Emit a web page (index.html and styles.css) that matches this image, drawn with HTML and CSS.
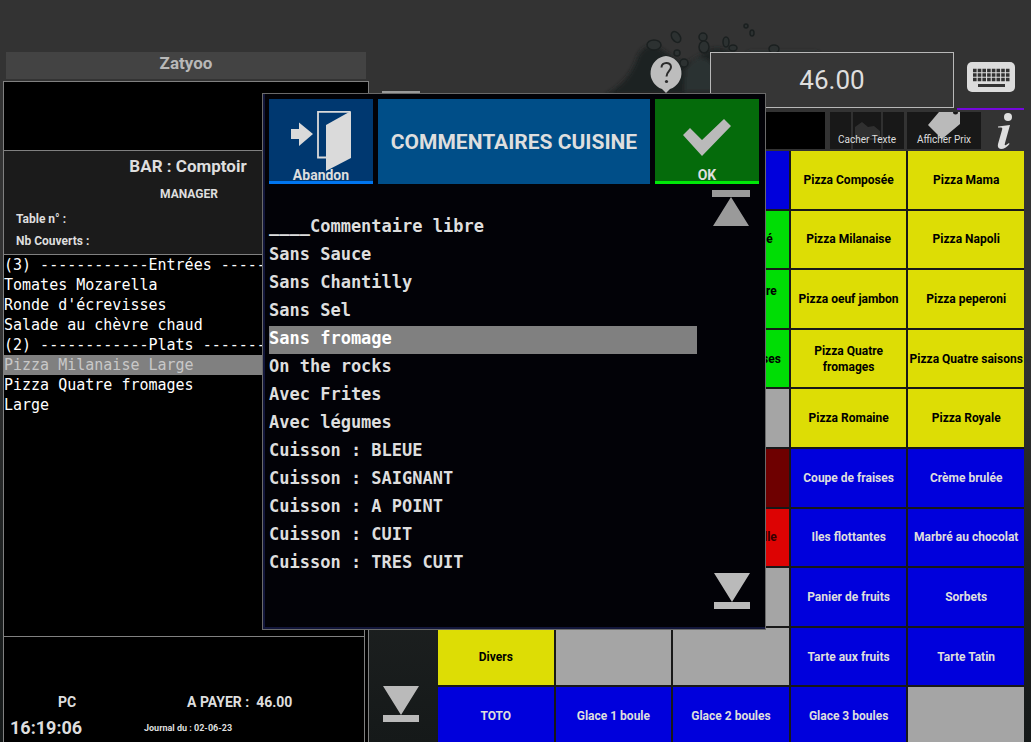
FILE: index.html
```
<!DOCTYPE html>
<html lang="fr">
<head>
<meta charset="utf-8">
<title>Zatyoo</title>
<link rel="stylesheet" href="styles.css">
</head>
<body>
<svg class="splash" width="240" height="110" viewBox="0 0 240 110" aria-hidden="true">
  <defs><filter id="soft"><feGaussianBlur stdDeviation="2"/></filter></defs>
  <g filter="url(#soft)" fill="#1b2020">
    <path d="M5 95 Q30 82 38 56 Q44 44 56 46 Q68 54 84 64 Q98 58 108 50 Q120 46 132 52 L150 95Z"/>
    <path d="M85 70 Q98 48 112 64 T126 92 H84Z" fill="#2b3030"/>
    <path d="M148 52 h70 v6 h-70z" fill="#292e2e"/>
  </g>
  <g fill="#2c3131" stroke="#1b2020" stroke-width="1.5">
    <ellipse cx="54" cy="45" rx="7" ry="5"/>
    <ellipse cx="76" cy="37" rx="4" ry="6" transform="rotate(-35 76 37)"/>
    <ellipse cx="103" cy="37" rx="4" ry="4"/>
    <ellipse cx="104" cy="47" rx="5" ry="6"/>
    <ellipse cx="126" cy="42" rx="3" ry="5"/>
    <ellipse cx="133" cy="48" rx="4" ry="3"/>
    <ellipse cx="77" cy="53" rx="3" ry="3"/>
    <ellipse cx="84" cy="63" rx="4" ry="4"/>
    <ellipse cx="146" cy="26" rx="2" ry="2"/>
    <ellipse cx="152" cy="33" rx="2" ry="3"/>
    <ellipse cx="174" cy="49" rx="5" ry="4"/>
  </g>
</svg>

<div class="app">
  <section class="ticket">
    <h1 class="ticket-title">Zatyoo</h1>
    <div class="ticket-box">
      <div class="ticket-blank"></div>
      <div class="ticket-info">
        <p class="place">BAR : Comptoir</p>
        <p class="user">MANAGER</p>
        <p class="field">Table n° :</p>
        <p class="field">Nb Couverts :</p>
      </div>
      <ul class="lines">
        <li>(3) ------------Entrées -----</li>
        <li>Tomates Mozarella</li>
        <li>Ronde d'écrevisses</li>
        <li>Salade au chèvre chaud</li>
        <li>(2) ------------Plats -------</li>
        <li class="selected">Pizza Milanaise Large</li>
        <li>Pizza Quatre fromages</li>
        <li>Large</li>
      </ul>
      <footer class="totals">
        <span class="station">PC</span>
        <span class="due">A PAYER :&nbsp; 46.00</span>
        <time class="clock">16:19:06</time>
        <span class="journal">Journal du : 02-06-23</span>
      </footer>
    </div>
  </section>

  <div class="scroller">
    <button class="icon-button" aria-label="Monter"><svg width="38" height="36" viewBox="0 0 38 36"><path d="M0 0h38v6H0zM19 7l18 29H1z" fill="#9a9a9a"/></svg></button>
    <button class="icon-button" aria-label="Descendre"><svg width="36" height="36" viewBox="0 0 36 36"><path d="M0 0h36L18 29zM0 29h36v7H0z" fill="#bababa"/></svg></button>
  </div>

  <main class="catalog">
    <div class="topbar">
      <button class="icon-button help" aria-label="Aide">
        <svg width="34" height="37" viewBox="0 0 34 37"><path d="M17 0a17 17 0 0 1 4 33l-4 4-4-4A17 17 0 0 1 17 0z" fill="#bdbdbd"/><path d="M12.500 11.500c0-6 9.500-6 9.500-.5 0 4-4.500 4.500-4.500 9.500" fill="none" stroke="#2a2a2a" stroke-width="2"/><circle cx="17.500" cy="25.500" r="1.600" fill="#2a2a2a"/></svg>
      </button>
      <output class="amount">46.00</output>
      <button class="icon-button keyboard" aria-label="Clavier">
        <svg width="48" height="30" viewBox="0 0 48 30"><rect width="48" height="30" rx="5" fill="#dcdcdc"/><path d="M6 8.500h37M6 13h37M6 17.500h37" stroke="#333" stroke-width="3.500" stroke-dasharray="3.600 1.100"/><path d="M11 23.500h27" stroke="#333" stroke-width="3"/></svg>
      </button>
    </div>
    <div class="tools">
      <div class="tool-blank"></div>
      <button class="tool">
        <svg width="74" height="37" viewBox="0 0 74 37"><path d="M22 0v37M52 0v37M22 27h30" fill="none" stroke="#303030" stroke-width="2"/><path d="M25 25V15l7-5 6 5 6-1 6 5v6z" fill="#303030"/></svg>
        <span>Cacher Texte</span>
      </button>
      <button class="tool">
        <svg width="74" height="37" viewBox="0 0 74 37"><path d="M32 0H46a2.500 2.500 0 0 0 5 0h2v12L35 27 21 13z" fill="#bababa"/></svg>
        <span>Afficher Prix</span>
      </button>
      <button class="icon-button info" aria-label="Informations">
        <svg width="20" height="37" viewBox="0 0 20 37"><circle cx="14" cy="5" r="4" fill="#dedede"/><path d="M4 14.500l12-1.500-5 18q-1 3 1 2l3-2 .5 1q-4 5-8.500 5-4-.5-3-5l4-14q1-3-1.500-2.500H4z" fill="#dedede"/></svg>
      </button>
    </div>
    <div class="products">
      <button class="p gray"></button><button class="p gray"></button><button class="p blue"></button><button class="p yellow">Pizza Composée</button><button class="p yellow">Pizza Mama</button>
      <button class="p gray"></button><button class="p gray"></button><button class="p green tail wide">é</button><button class="p yellow">Pizza Milanaise</button><button class="p yellow">Pizza Napoli</button>
      <button class="p gray"></button><button class="p gray"></button><button class="p green tail">re<br>&nbsp;</button><button class="p yellow">Pizza oeuf jambon</button><button class="p yellow">Pizza peperoni</button>
      <button class="p gray"></button><button class="p gray"></button><button class="p green tail slim">ses</button><button class="p yellow">Pizza Quatre fromages</button><button class="p yellow">Pizza Quatre saisons</button>
      <button class="p gray"></button><button class="p gray"></button><button class="p gray"></button><button class="p yellow">Pizza Romaine</button><button class="p yellow">Pizza Royale</button>
      <button class="p gray"></button><button class="p gray"></button><button class="p maroon"></button><button class="p blue">Coupe de fraises</button><button class="p blue">Crème brulée</button>
      <button class="p gray"></button><button class="p gray"></button><button class="p red tail">lle</button><button class="p blue">Iles flottantes</button><button class="p blue">Marbré au chocolat</button>
      <button class="p gray"></button><button class="p gray"></button><button class="p gray"></button><button class="p blue">Panier de fruits</button><button class="p blue">Sorbets</button>
      <button class="p yellow">Divers</button><button class="p gray"></button><button class="p gray"></button><button class="p blue">Tarte aux fruits</button><button class="p blue">Tarte Tatin</button>
      <button class="p blue">TOTO</button><button class="p blue">Glace 1 boule</button><button class="p blue">Glace 2 boules</button><button class="p blue">Glace 3 boules</button><button class="p gray"></button>
    </div>
  </main>
</div>

<div class="dialog" role="dialog" aria-labelledby="dialog-title">
  <header class="dialog-head">
    <button class="action cancel">
      <svg width="60" height="60" viewBox="0 0 60 60"><path d="M0 18h8v-6.500l14 11.500-14 12v-7H0z" fill="#dadada"/><path d="M35 46.500h-8V.8h32" fill="none" stroke="#dadada" stroke-width="1.800"/><path d="M35 14L60 0v47L35 60z" fill="#dadada"/></svg>
      <span>Abandon</span>
    </button>
    <h2 class="dialog-title" id="dialog-title">COMMENTAIRES CUISINE</h2>
    <button class="action ok">
      <svg width="48" height="60" viewBox="0 0 48 60"><path d="M0 24l7-7 12 12L41 8l7 7-29 30z" fill="#bababa"/></svg>
      <span>OK</span>
    </button>
  </header>
  <div class="dialog-body">
    <ul class="comments">
      <li>____Commentaire libre</li>
      <li>Sans Sauce</li>
      <li>Sans Chantilly</li>
      <li>Sans Sel</li>
      <li class="selected">Sans fromage</li>
      <li>On the rocks</li>
      <li>Avec Frites</li>
      <li>Avec légumes</li>
      <li>Cuisson : BLEUE</li>
      <li>Cuisson : SAIGNANT</li>
      <li>Cuisson : A POINT</li>
      <li>Cuisson : CUIT</li>
      <li>Cuisson : TRES CUIT</li>
    </ul>
    <div class="dialog-scroll">
      <button class="icon-button" aria-label="Monter"><svg width="38" height="36" viewBox="0 0 38 36"><path d="M0 0h38v7H0zM19 7l18 29H1z" fill="#9a9a9a"/></svg></button>
      <button class="icon-button" aria-label="Descendre"><svg width="36" height="36" viewBox="0 0 36 36"><path d="M0 0h36L18 29zM0 29h36v7H0z" fill="#bababa"/></svg></button>
    </div>
  </div>
</div>
</body>
</html>
```
FILE: styles.css
```
* { box-sizing: border-box; }

body {
  margin: 0;
  height: 100vh;
  overflow: hidden;
  background: linear-gradient(#333 0, #333 45%, #1f2222 75%, #151919);
  color: #dedede;
  font-family: "Arial Narrow", Roboto, "Liberation Sans", sans-serif;
  font-weight: bold;
}

h1, h2, p, ul { margin: 0; padding: 0; font-weight: bold; }
ul { list-style: none; }
svg { display: block; }

button {
  margin: 0;
  padding: 0;
  border: 0;
  background: none;
  color: inherit;
  font: inherit;
}

.splash { position: absolute; left: 600px; top: 0; }

.app {
  position: relative;
  display: flex;
  height: 100vh;
}

.ticket {
  flex: 0 0 369px;
  display: flex;
  flex-direction: column;
  padding: 52px 0 0 3px;
}

.ticket-title {
  flex: none;
  margin: 0 3px 2px;
  height: 27px;
  background: #434343;
  color: #b8b8b8;
  font-size: 17px;
  line-height: 22px;
  text-align: center;
}

.ticket-box {
  flex: 1;
  min-height: 0;
  display: flex;
  flex-direction: column;
  border: 1px solid #808080;
  border-bottom: 0;
  background: #000;
  padding-right: 3px;
}

.ticket-blank { flex: none; height: 68px; }

.ticket-info {
  flex: none;
  height: 105px;
  border: solid #808080;
  border-width: 1px 1px 1px 0;
  background: #1b1b1b;
}

.place { padding-top: 4px; padding-left: 8px; font-size: 17px; line-height: 22px; text-align: center; }
.user { padding: 7px 0 4px 10px; font-size: 12px; line-height: 20px; text-align: center; }
.field { padding-left: 12px; font-size: 12px; line-height: 22px; }

.lines {
  flex: 1;
  overflow: hidden;
  border-right: 1px solid #808080;
  color: #fff;
  font: 15px/20px "DejaVu Sans Mono", monospace;
}

.lines li { height: 20px; white-space: nowrap; }
.selected { background: #808080; }
.lines .selected { color: #c8c8c8; }

.totals {
  flex: none;
  display: grid;
  grid-template-columns: 128px 1fr;
  align-content: end;
  height: 106px;
  padding-left: 6px;
  border: solid #808080;
  border-width: 1px 1px 0 0;
  font-size: 14px;
  line-height: 24px;
}

.station { text-align: center; padding-right: 14px; }
.due { padding-left: 49px; }
.clock { font-size: 18px; line-height: 28px; }
.journal { padding-left: 6px; font-size: 9px; line-height: 28px; }

.scroller {
  flex: 0 0 68px;
  display: flex;
  flex-direction: column;
  justify-content: space-between;
  align-items: center;
  padding: 91px 4px 20px 0;
}

.catalog {
  flex: 1;
  min-width: 0;
  display: flex;
  flex-direction: column;
  padding: 52px 7px 0 1px;
}

.topbar {
  display: flex;
  align-items: flex-start;
  justify-content: flex-end;
  height: 58px;
}

.help { margin: 4px 27px 0 0; }

.amount {
  flex: 0 0 244px;
  height: 56px;
  border: 1px solid #b8b8b8;
  background: #363636;
  font-size: 26px;
  font-weight: normal;
  line-height: 54px;
  text-align: center;
}

.keyboard {
  margin-left: 3px;
  padding: 10px 9px 16px 10px;
  border-bottom: 2px solid #7508dc;
}

.tools {
  display: flex;
  gap: 3px;
  height: 37px;
  margin: 2px 0;
}

.tool-blank { flex: 1; margin-right: 2px; background: #000; }

.tool {
  display: grid;
  width: 74px;
  background: #181818;
  font-size: 10px;
  font-weight: normal;
}

.tool > *, .action > * { grid-area: 1 / 1; }
.tool span { align-self: end; line-height: 18px; }
.info { width: 40px; padding-left: 10px; }

.products {
  flex: 1;
  display: grid;
  grid-template-columns: repeat(5, minmax(0, 1fr));
  grid-auto-rows: minmax(0, 1fr);
  gap: 2px;
  margin-bottom: -3px;
  background: #181818;
  font-size: 12px;
  line-height: 16px;
}

.p { overflow: hidden; }
.gray { background: #a5a5a5; }
.blue { background: #0000dc; }
.yellow { background: #dddd05; color: #000; }
.green { background: #00dd05; color: #000; }
.maroon { background: #6e0000; }
.red { background: #dd0303; color: #300; }
.tail { padding-right: 12px; text-align: right; }
.wide { padding-right: 16px; }
.slim { padding-right: 8px; }

.dialog {
  position: absolute;
  left: 262px;
  top: 93px;
  width: 504px;
  border: 1px solid #6a6a6a;
  background: #020207;
  box-shadow: inset 2px -2px 0 #12163a;
  padding: 5px 6px 0;
}

.dialog-head { display: flex; gap: 5px; }

.action {
  display: grid;
  justify-items: center;
  width: 104px;
  height: 85px;
  padding-top: 12px;
  font-size: 14px;
}

.action span { align-self: end; line-height: 12px; }
.action svg { align-self: start; }
.cancel { background: #003870; border-bottom: 3px solid #0075ef; }
.ok { background: #056b0b; border-bottom: 3px solid #00e808; }

.dialog-title {
  flex: 1;
  background: #004e88;
  font-size: 21px;
  line-height: 86px;
  height: 85px;
  text-align: center;
  white-space: nowrap;
}

.dialog-body { display: flex; justify-content: space-between; }

.comments {
  flex: 0 0 428px;
  padding: 30px 0 51px;
  font: bold 17px/24px "DejaVu Sans Mono", monospace;
}

.comments li { height: 28px; }
.comments .selected { color: #fff; }

.dialog-scroll {
  display: flex;
  flex-direction: column;
  justify-content: space-between;
  align-items: flex-end;
  padding: 6px 9px 20px 0;
}
```
